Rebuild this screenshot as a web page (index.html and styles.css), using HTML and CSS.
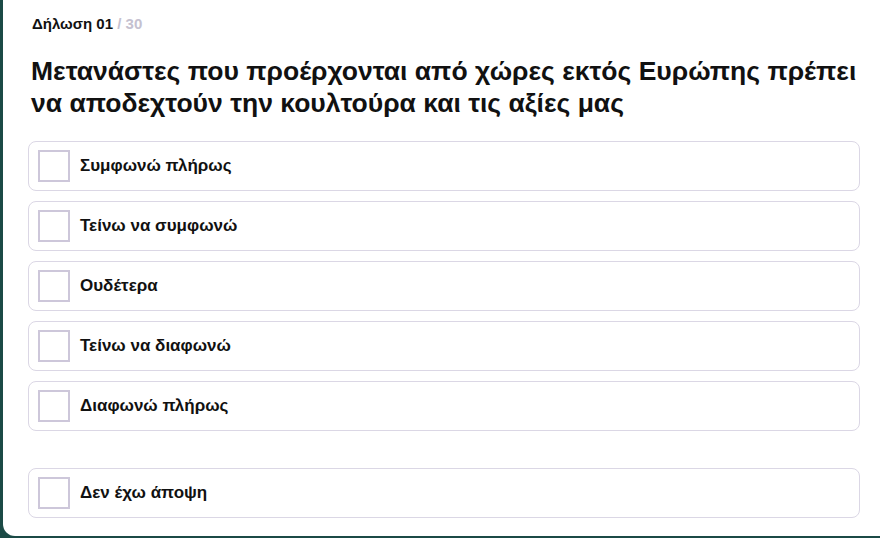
FILE: index.html
```html
<html>
  <head>
    <meta charset="utf-8" />
    <link rel="stylesheet" href="styles.css">
  </head>
  <body>
    <div class="card">
      <div class="counter">Δήλωση 01 <span class="total">/ 30</span></div>
      <h1 class="statement">
        Μετανάστες που προέρχονται από χώρες εκτός Ευρώπης πρέπει να
        αποδεχτούν την κουλτούρα και τις αξίες μας
      </h1>

      <div class="options">
        <label class="option">
          <span class="check"></span>
          <span class="option-text">Συμφωνώ πλήρως</span>
        </label>
        <label class="option">
          <span class="check"></span>
          <span class="option-text">Τείνω να συμφωνώ</span>
        </label>
        <label class="option">
          <span class="check"></span>
          <span class="option-text">Ουδέτερα</span>
        </label>
        <label class="option">
          <span class="check"></span>
          <span class="option-text">Τείνω να διαφωνώ</span>
        </label>
        <label class="option">
          <span class="check"></span>
          <span class="option-text">Διαφωνώ πλήρως</span>
        </label>
        <label class="option option-none">
          <span class="check"></span>
          <span class="option-text">Δεν έχω άποψη</span>
        </label>
      </div>
    </div>
  </body>
</html>
```

FILE: styles.css
```css
body {
  margin: 0;
  background-color: #1b4a46;
  font-family: "Liberation Sans", Arial, sans-serif;
  color: #111;
}
.card {
  margin-left: 3px;
  height: 536px;
  box-sizing: border-box;
  background-color: #fff;
  border-bottom-left-radius: 12px;
  padding: 15px 20px 0 25px;
}
.counter {
  font-size: 15px;
  line-height: 18px;
  font-weight: bold;
  padding-left: 4px;
}
.total {
  color: #c5c1d0;
}
.statement {
  margin: 22px 0 22px 3px;
  font-size: 26.5px;
  line-height: 32px;
  font-weight: bold;
}
.options {
  display: flex;
  flex-direction: column;
  gap: 10px;
}
.option {
  display: flex;
  align-items: center;
  gap: 10px;
  height: 50px;
  box-sizing: border-box;
  padding-left: 9px;
  border: 1px solid #dbd7e5;
  border-radius: 8px;
  cursor: pointer;
}
.option-none {
  margin-top: 27px;
}
.check {
  width: 32px;
  height: 32px;
  box-sizing: border-box;
  border: 2px solid #cdc7da;
}
.option-text {
  font-size: 17px;
  font-weight: bold;
}
```
